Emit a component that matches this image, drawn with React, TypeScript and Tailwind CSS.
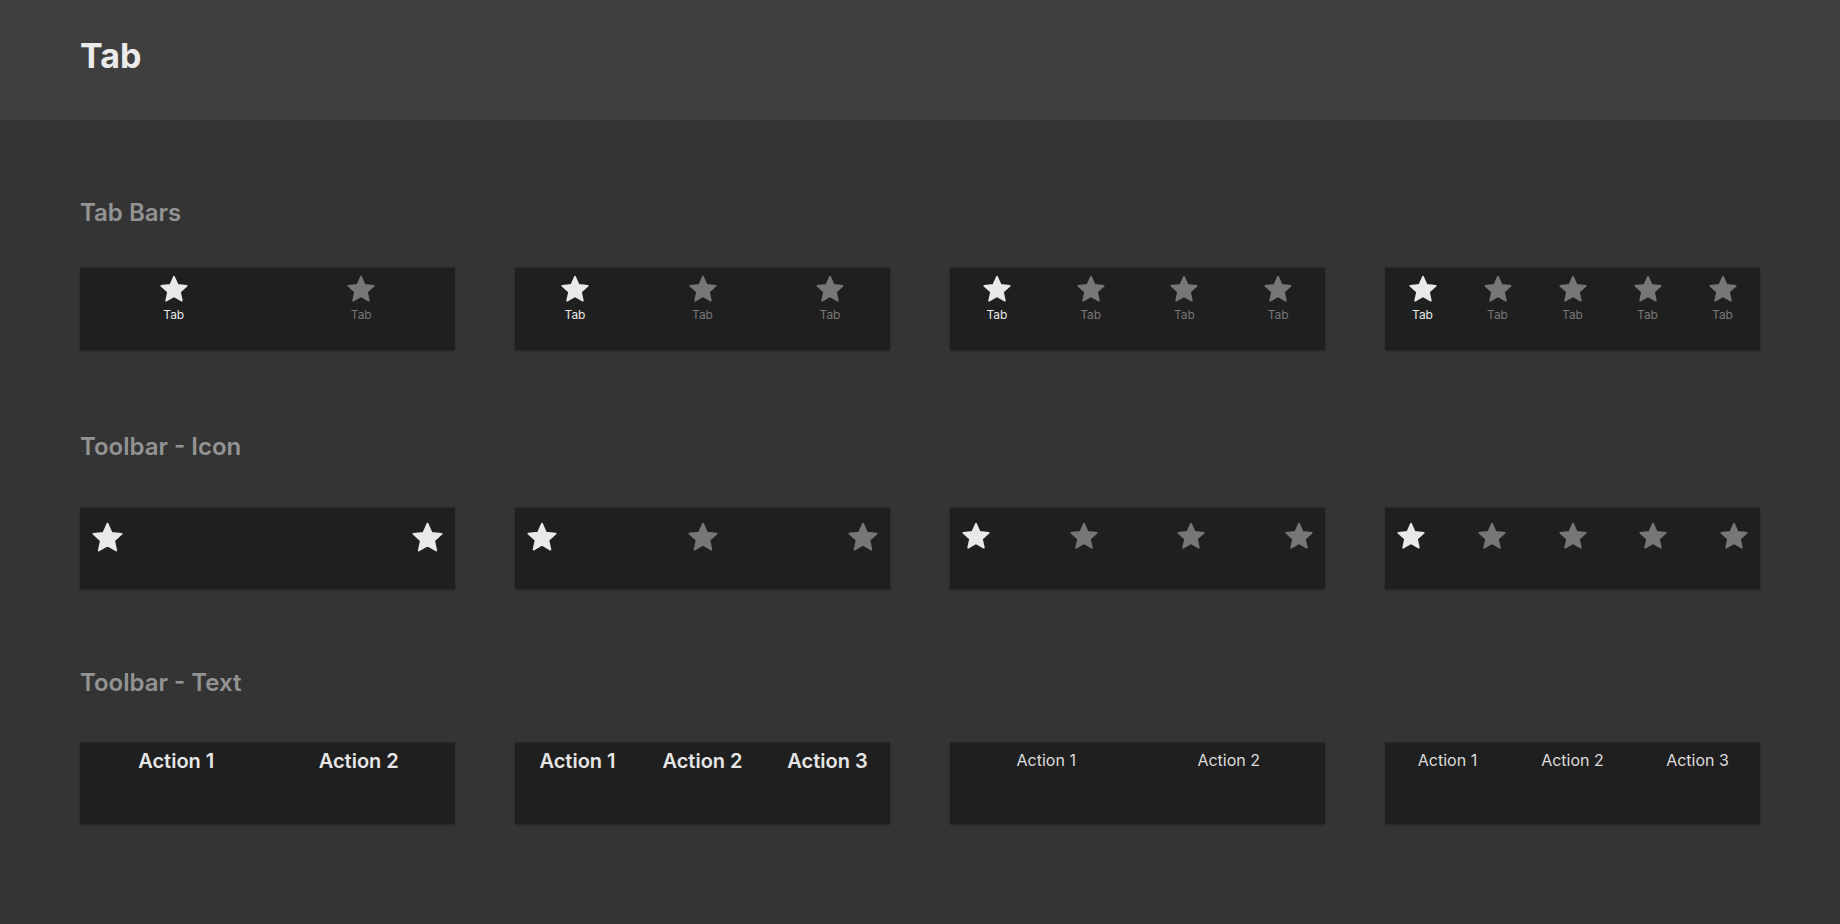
import React from "react";

const STAR =
  "M12 1.3 L15.17 8.43 L22.94 9.25 L17.14 14.47 L18.76 22.1 L12 18.2 L5.24 22.1 L6.86 14.47 L1.06 9.25 L8.83 8.43 Z";

function Star({ size, active }: { size: number; active: boolean }) {
  const c = active ? "#e9e9e9" : "#777777";
  return (
    <svg width={size} height={size} viewBox="0 0 24 24" className="block shrink-0">
      <path d={STAR} fill={c} stroke={c} strokeWidth={1.4} strokeLinejoin="round" />
    </svg>
  );
}

const boxCls =
  "w-[375px] bg-[#1f1f1f] border-t border-[#2a2a2a] shadow-[0_1px_2px_rgba(0,0,0,0.3)]";

function TabBar({ n }: { n: number }) {
  const items = Array.from({ length: n }, (_, i) => i);
  const three = n === 3;
  return (
    <div className={`${boxCls} h-[83px] flex ${three ? "justify-between" : ""}`}>
      {items.map((i) => (
        <div
          key={i}
          className={`${three ? "w-[120px]" : "flex-1"} flex flex-col items-center pt-[7px]`}
        >
          <Star size={28} active={i === 0} />
          <span
            className={`mt-[6px] text-[12px] leading-none font-normal ${
              i === 0 ? "text-[#e9e9e9]" : "text-[#777777]"
            }`}
          >
            Tab
          </span>
        </div>
      ))}
    </div>
  );
}

function IconToolbar({ n, size }: { n: number; size: number }) {
  const items = Array.from({ length: n }, (_, i) => i);
  return (
    <div className={`${boxCls} h-[82px] flex justify-between items-start px-[12px] pt-[14px]`}>
      {items.map((i) => (
        <Star key={i} size={size} active={n === 2 ? true : i === 0} />
      ))}
    </div>
  );
}

function TextToolbar({ n, bold }: { n: number; bold: boolean }) {
  const items = Array.from({ length: n }, (_, i) => i + 1);
  return (
    <div className={`${boxCls} h-[82px] flex ${n === 2 ? "px-[5px]" : ""}`}>
      {items.map((i) => (
        <div
          key={i}
          className={`flex-1 flex justify-center ${bold ? "pt-[8px]" : "pt-[9px]"}`}
        >
          <span
            className={
              bold
                ? "text-[20px] leading-none font-semibold text-[#e6e6e6]"
                : "text-[16px] leading-none font-normal text-[#dddddd]"
            }
          >
            Action {i}
          </span>
        </div>
      ))}
    </div>
  );
}

function Heading({ children }: { children: React.ReactNode }) {
  return (
    <h2 className="text-[24px] leading-none font-semibold text-[#939393]">{children}</h2>
  );
}

export default function App() {
  return (
    <div
      className="w-[1840px] h-[924px] bg-[#343434] overflow-hidden"
      style={{ fontFamily: "Inter, 'Noto Sans', sans-serif" }}
    >
      <header className="h-[120px] bg-[#3f3f3f] px-[80px] pt-[39px]">
        <h1 className="text-[34px] leading-none font-bold text-[#ebebeb]">Tab</h1>
      </header>
      <main className="px-[80px] pt-[81px]">
        <section>
          <Heading>Tab Bars</Heading>
          <div className="mt-[42px] flex justify-between">
            <TabBar n={2} />
            <TabBar n={3} />
            <TabBar n={4} />
            <TabBar n={5} />
          </div>
        </section>
        <section className="mt-[85px]">
          <Heading>Toolbar - Icon</Heading>
          <div className="mt-[48px] flex justify-between">
            <IconToolbar n={2} size={31} />
            <IconToolbar n={3} size={30} />
            <IconToolbar n={4} size={28} />
            <IconToolbar n={5} size={28} />
          </div>
        </section>
        <section className="mt-[82px]">
          <Heading>Toolbar - Text</Heading>
          <div className="mt-[47px] flex justify-between">
            <TextToolbar n={2} bold />
            <TextToolbar n={3} bold />
            <TextToolbar n={2} bold={false} />
            <TextToolbar n={3} bold={false} />
          </div>
        </section>
      </main>
    </div>
  );
}
